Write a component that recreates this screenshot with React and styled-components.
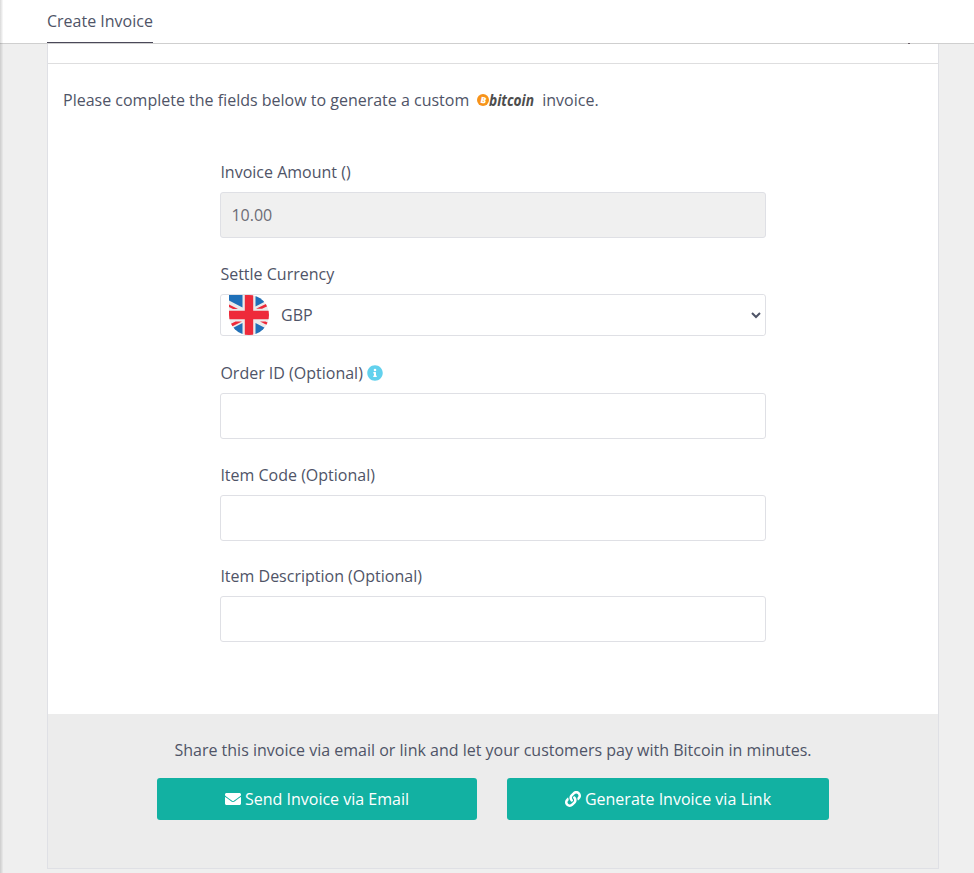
import React from "react";
import styled, { createGlobalStyle } from "styled-components";

const GlobalStyle = createGlobalStyle`
  *, *::before, *::after { box-sizing: border-box; }
  body {
    margin: 0;
    background: #efefef;
    color: #4f5467;
    font: 400 16px/24px "Open Sans", "Noto Sans", sans-serif;
  }
`;

const Page = styled.div`
  height: 873px;
  overflow: hidden;
  display: flex;
  flex-direction: column;
  position: relative;
  &::before {
    content: "";
    position: absolute;
    z-index: 2;
    inset: 0 auto 0 0;
    width: 3px;
    background: linear-gradient(90deg, rgba(0, 0, 0, 0.15), rgba(0, 0, 0, 0.02));
  }
`;

const TopBar = styled.header`
  height: 44px;
  flex: none;
  padding-left: 47px;
  display: flex;
  align-items: flex-start;
  background: #fff;
  border-bottom: 1px solid #cfcfcf;
  position: relative;
`;

const Tab = styled.div`
  height: 43px;
  padding-top: 9px;
  border-bottom: 1px solid #4a4858;
`;

const ScrolledMark = styled.span`
  position: absolute;
  left: 908px;
  top: 43px;
  width: 2px;
  height: 1px;
  background: #6b6068;
`;

const Card = styled.main`
  width: 892px;
  height: 825px;
  margin-left: 47px;
  background: #fff;
  border: solid #dfe0e5;
  border-width: 0 1px 1px;
  display: flex;
  flex-direction: column;
`;

const CardHead = styled.div`
  height: 20px;
  flex: none;
  border-bottom: 1px solid #dededf;
`;

const CardBody = styled.div`
  height: 650px;
  flex: none;
  padding: 24px 15px 0;
`;

const Intro = styled.p`
  margin: 0;
  height: 24px;
  display: flex;
  align-items: center;
  white-space: pre;
`;

const BitcoinMark = styled.svg`
  width: 59px;
  height: 24px;
  margin: 0 7px;
  overflow: visible;
`;

const Form = styled.form`
  width: 546px;
  margin: 48px auto 0 157px;
`;

const Field = styled.div`
  margin-bottom: ${(p) => p.$gap ?? 24}px;
`;

const Label = styled.label`
  display: flex;
  align-items: center;
  gap: 4px;
  height: 24px;
  padding-left: 0.4px;
  margin-bottom: 8px;
`;

const Input = styled.input`
  display: block;
  width: 100%;
  height: 46px;
  padding: 0 10.4px;
  border: 1px solid #dfe0e5;
  border-radius: 3px;
  background: #fff;
  color: #6c6c76;
  font: inherit;
  &:disabled { background: #f0f0f0; }
`;

const SelectBox = styled.div`
  height: 42px;
  display: flex;
  align-items: center;
  padding: 0 1px 0 8px;
  border: 1px solid #dfe0e5;
  border-radius: 3px;
`;

const Select = styled.select`
  flex: 1;
  height: 40px;
  padding: 0 0 0 8px;
  border: 0;
  background: #fff;
  color: #4f5467;
  font: inherit;
  outline: 0;
`;

const CardFoot = styled.footer`
  flex: 1;
  padding-top: 24px;
  background: #ececec;
  text-align: center;
`;

const FootText = styled.p`
  margin: 0 0 16px;
`;

const Actions = styled.div`
  display: flex;
  gap: 30px;
  padding-left: 109px;
`;

const Button = styled.button`
  width: ${(p) => p.$width}px;
  height: 42px;
  display: flex;
  align-items: center;
  justify-content: center;
  gap: 4px;
  padding: 0;
  border: 0;
  border-radius: 3px;
  background: #12b1a2;
  color: #fff;
  font: inherit;
`;

const Flag = () => (
  <svg width="40" height="40" viewBox="0 0 40 40">
    <defs>
      <clipPath id="flagShape">
        <path d="M0 0H20A20 20 0 0 1 20 40A20 20 0 0 1 0 20Z" />
      </clipPath>
    </defs>
    <g clipPath="url(#flagShape)">
      <rect width="40" height="40" fill="#ebebeb" />
      <path d="M0 0H13.500V12.500L0 5.500ZM26.500 0H40V4.500L26.500 11.500ZM0 35L13.500 28V40H0ZM26.500 28L40 35V40H26.500Z" fill="#1f70b8" />
      <path d="M0 9.500L9 14H4L0 12ZM27 13.800L40 7.500V10.500L33 13.800ZM13 26.500L0 33V29.800L6.500 26.500ZM31 26.500H36.500L40 28.200V31Z" fill="#ee2a3a" />
      <path d="M20 0V40M0 20H40" stroke="#ee2a3a" strokeWidth="8.4" />
    </g>
  </svg>
);

const BitcoinLogo = () => (
  <BitcoinMark viewBox="0 0 59 24">
    <circle cx="7" cy="12" r="6" fill="#f7931a" />
    <text x="4.5" y="15.2" transform="rotate(12 7 12)" fill="#fff" fontSize="8.5" fontWeight="800" fontFamily="Open Sans">B</text>
    <text x="13" y="17.500" fill="#4d4d4d" fontSize="15.5" fontWeight="700" fontStyle="italic" fontFamily="Open Sans" textLength="45" lengthAdjust="spacingAndGlyphs">bitcoin</text>
  </BitcoinMark>
);

const InfoIcon = () => (
  <svg width="16" height="16" viewBox="0 0 512 512" fill="#62d1ed">
    <path d="M256 8C119 8 8 119 8 256s111 248 248 248 248-111 248-248S393 8 256 8zm0 110a42 42 0 1 1 0 84 42 42 0 0 1 0-84zm56 254a12 12 0 0 1-12 12h-88a12 12 0 0 1-12-12v-24a12 12 0 0 1 12-12h12v-64h-12a12 12 0 0 1-12-12v-24a12 12 0 0 1 12-12h64a12 12 0 0 1 12 12v100h12a12 12 0 0 1 12 12v24z" />
  </svg>
);

const MailIcon = () => (
  <svg width="16" height="16" viewBox="0 0 512 512" fill="currentColor">
    <path d="M502.3 190.8c3.9-3.1 9.7-.2 9.7 4.7V400c0 26.500-21.500 48-48 48H48c-26.500 0-48-21.500-48-48V195.600c0-5 5.700-7.800 9.700-4.700 22.400 17.400 52.100 39.500 154.100 113.600 21.100 15.400 56.700 47.800 92.200 47.600 35.700.3 72-32.800 92.300-47.600 102-74.100 131.600-96.300 154-113.700zM256 320c23.200.4 56.600-29.200 73.400-41.400 132.700-96.300 142.800-104.700 173.400-128.700 5.800-4.500 9.200-11.500 9.200-18.900v-19c0-26.500-21.500-48-48-48H48c-26.500 0-48 21.500-48 48v19c0 7.400 3.400 14.300 9.200 18.900 30.600 23.900 40.700 32.400 173.400 128.700 16.800 12.200 50.200 41.800 73.400 41.400z" />
  </svg>
);

const LinkIcon = () => (
  <svg width="16" height="16" viewBox="0 0 512 512" fill="currentColor">
    <path d="M326.612 185.391c59.747 59.809 58.927 155.698.36 214.590-.11.120-.24.250-.36.370l-67.200 67.200c-59.270 59.270-155.699 59.262-214.960 0-59.270-59.260-59.270-155.700 0-214.960l37.106-37.106c9.840-9.840 26.786-3.300 27.294 10.606.648 17.722 3.826 35.527 9.690 52.721 1.986 5.822.567 12.262-3.783 16.612l-13.087 13.087c-28.026 28.026-28.905 73.660-1.155 101.960 28.024 28.579 74.086 28.749 102.325.510l67.200-67.190c28.191-28.191 28.073-73.757 0-101.830-3.701-3.694-7.429-6.564-10.341-8.569a16.037 16.037 0 0 1-6.947-12.606c-.396-10.567 3.348-21.456 11.698-29.806l21.054-21.055c5.521-5.521 14.182-6.199 20.584-1.731a152.482 152.482 0 0 1 20.522 17.197zM467.547 44.449c-59.261-59.262-155.690-59.270-214.960 0l-67.200 67.200c-.120.120-.250.250-.360.370-58.566 58.892-59.387 154.781.360 214.590a152.454 152.454 0 0 0 20.521 17.196c6.402 4.468 15.064 3.789 20.584-1.731l21.054-21.055c8.350-8.350 12.094-19.239 11.698-29.806a16.037 16.037 0 0 0-6.947-12.606c-2.912-2.005-6.640-4.875-10.341-8.569-28.073-28.073-28.191-73.639 0-101.830l67.200-67.190c28.239-28.239 74.300-28.069 102.325.510 27.750 28.300 26.872 73.934-1.155 101.960l-13.087 13.087c-4.350 4.350-5.769 10.790-3.783 16.612 5.864 17.194 9.042 34.999 9.690 52.721.509 13.906 17.454 20.446 27.294 10.606l37.106-37.106c59.271-59.259 59.271-155.699.001-214.959z" />
  </svg>
);

export default function App() {
  return (
    <Page>
      <GlobalStyle />
      <TopBar>
        <Tab>Create Invoice</Tab>
        <ScrolledMark />
      </TopBar>
      <Card>
        <CardHead />
        <CardBody>
          <Intro>
            Please complete the fields below to generate a custom
            <BitcoinLogo />
            invoice.
          </Intro>
          <Form>
            <Field>
              <Label htmlFor="amount">Invoice Amount ()</Label>
              <Input id="amount" defaultValue="10.00" disabled />
            </Field>
            <Field $gap={25}>
              <Label htmlFor="currency">Settle Currency</Label>
              <SelectBox>
                <Flag />
                <Select id="currency">
                  <option>GBP</option>
                </Select>
              </SelectBox>
            </Field>
            <Field>
              <Label htmlFor="order">Order ID (Optional)<InfoIcon /></Label>
              <Input id="order" />
            </Field>
            <Field $gap={23}>
              <Label htmlFor="code">Item Code (Optional)</Label>
              <Input id="code" />
            </Field>
            <Field>
              <Label htmlFor="description">Item Description (Optional)</Label>
              <Input id="description" />
            </Field>
          </Form>
        </CardBody>
        <CardFoot>
          <FootText>Share this invoice via email or link and let your customers pay with Bitcoin in minutes.</FootText>
          <Actions>
            <Button $width={320}><MailIcon />Send Invoice via Email</Button>
            <Button $width={322}><LinkIcon />Generate Invoice via Link</Button>
          </Actions>
        </CardFoot>
      </Card>
    </Page>
  );
}
